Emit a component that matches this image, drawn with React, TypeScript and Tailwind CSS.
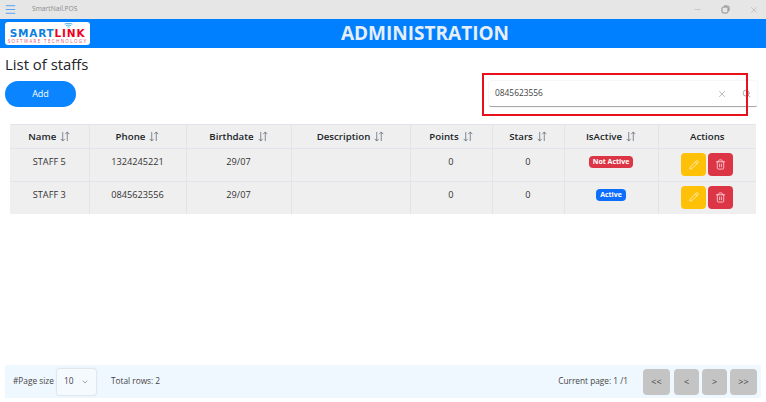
import React from "react";
import { Menu, Minus, X, Search, ChevronDown, Pencil, Trash2 } from "lucide-react";

const font = { fontFamily: '"Open Sans","Noto Sans",sans-serif' };
const cols = [79, 97, 105, 119, 82, 72, 94, 98];
const heads = ["Name", "Phone", "Birthdate", "Description", "Points", "Stars", "IsActive", "Actions"];

function Sort() {
  return (
    <svg width="10" height="11" viewBox="0 0 11 12" fill="none" stroke="#6a7280" strokeWidth="0.9" className="ml-[4px] shrink-0">
      <path d="M3 1v10M.8 8.600 3 11l2.200-2.400M8 11V1M5.800 3.400 8 1l2.200 2.400" />
    </svg>
  );
}

function Row({ name, phone, active }: { name: string; phone: string; active: boolean }) {
  return (
    <tr className="h-[32.5px]">
      {[name, phone, "29/07", "", "0", "0"].map((v, i) => (
        <td key={i} className="p-0 align-top border-t border-r border-[#e1e4ea] pt-[6px] text-center text-[9.2px] leading-[14px] text-[#333]">
          {v}
        </td>
      ))}
      <td className="p-0 align-top border-t border-r border-[#e1e4ea] pt-[7px]">
        <div className="flex justify-center">
          <span className={`block h-[12px] rounded-[4px] px-[4px] text-[7px] font-bold leading-[12px] text-white ${active ? "bg-[#0d6efd]" : "bg-[#dc3545]"}`}>
            {active ? "Active" : "Not Active"}
          </span>
        </div>
      </td>
      <td className="p-0 align-top border-t border-[#e1e4ea]">
        <div className="flex justify-center gap-[2px] pt-[4px]">
          <div className="flex h-[23px] w-[25px] items-center justify-center rounded-[4px] bg-[#ffc107]">
            <Pencil size={10} color="#fff" strokeWidth={1.5} />
          </div>
          <div className="flex h-[23px] w-[25px] items-center justify-center rounded-[4px] bg-[#dc3545]">
            <Trash2 size={11} color="#ffd5da" strokeWidth={1.8} />
          </div>
        </div>
      </td>
    </tr>
  );
}

function PageBtn({ t, w }: { t: string; w: string }) {
  return (
    <div className={`flex h-[26px] items-center justify-center rounded-[4px] bg-[#c4c4c4] text-[9px] text-[#444] ${w}`}>{t}</div>
  );
}

export default function App() {
  return (
    <div className="relative flex h-[402px] w-[766px] flex-col overflow-hidden bg-white" style={font}>
      <div className="flex h-[19px] items-center bg-[#e6e6e6]">
        <Menu size={13} color="#3f9bf5" strokeWidth={1.6} className="ml-[4px]" />
        <span className="ml-[15px] text-[6.7px] text-[#8a8a8a]">SmartNail.POS</span>
        <div className="ml-auto mr-[7px] flex items-center gap-[19px] text-[#999]">
          <Minus size={9} strokeWidth={1} />
          <svg width="9" height="9" viewBox="0 0 9 9" fill="none" stroke="#888" strokeWidth="1">
            <rect x="1" y="2" width="6" height="6" rx="1.5" />
            <path d="M3 1h3.500A1.500 1.500 0 0 1 8 2.500V6" />
          </svg>
          <X size={10} strokeWidth={1} />
        </div>
      </div>

      <div className="flex h-[29px] items-center bg-[#0080ff] pl-[5px] pr-[6px]">
        <div className="relative flex h-[23px] w-[85px] shrink-0 flex-col items-center rounded-[3px] bg-white pt-[7px]">
          <svg width="9" height="5" viewBox="0 0 9 5" fill="none" stroke="#2aa4e8" strokeWidth="0.9" className="absolute left-[59px] top-[1px]">
            <path d="M.6 1.200c2.400-1.200 5.400-1.200 7.800 0M2 2.700c1.600-.8 3.400-.8 5 0M3.500 4.200c.6-.3 1.400-.3 2 0" />
          </svg>
          <div className="whitespace-nowrap text-[10.5px] font-black leading-[9px] tracking-[0.8px]" style={{ fontFamily: '"DejaVu Sans",sans-serif' }}>
            <span className="text-[#0a7fe0]">SMART</span>
            <span className="text-[#f00020]">LINK</span>
          </div>
          <div className="mt-[1px] whitespace-nowrap text-[4.500px] leading-[5px] tracking-[1.350px] text-[#e8506a]">SOFTWARE TECHNOLOGY</div>
        </div>
        <span className="flex-1 text-center text-[19px] font-bold leading-[29px] text-[#e6eef8]">ADMINISTRATION</span>
      </div>

      <div className="px-[5px]">
        <h1 className="mt-[5px] h-[22px] text-[14.9px] leading-[22px] text-[#212529]">List of staffs</h1>
      </div>

      <div className="mt-[6px] flex items-start justify-between pl-[5px] pr-[9px]">
        <button className="flex h-[26px] w-[71px] items-center justify-center rounded-[13px] bg-[#0a84ff] text-[9px] text-white">Add</button>
        <div className="flex h-[26px] w-[268px] items-center rounded-[2px] border-b border-[#a8a8a8] bg-white pl-[6px] pr-[6px] shadow-[0_0_2px_rgba(0,0,0,0.12)]">
          <span className="text-[8.4px] text-[#444]">0845623556</span>
          <X size={10} color="#777" strokeWidth={1.2} className="ml-auto mr-[15px]" />
          <Search size={9} color="#777" strokeWidth={1.6} />
        </div>
      </div>

      <div className="ml-[10px] mt-[17px] w-[746px]">
        <table className="table-fixed border-collapse bg-[#efefef]" style={{ width: 746 }}>
          <colgroup>
            {cols.map((w, i) => (
              <col key={i} style={{ width: w }} />
            ))}
          </colgroup>
          <thead>
            <tr className="h-[24px]">
              {heads.map((h, i) => (
                <th key={h} className={`p-0 border-t border-[#e1e4ea] ${i < 7 ? "border-r" : ""} text-[9.7px] font-semibold leading-[14px] text-[#212529]`}>
                  <div className="flex items-center justify-center">
                    {h}
                    {i < 7 && <Sort />}
                  </div>
                </th>
              ))}
            </tr>
          </thead>
          <tbody>
            <Row name="STAFF 5" phone="1324245221" active={false} />
            <Row name="STAFF 3" phone="0845623556" active={true} />
          </tbody>
        </table>
      </div>

      <div className="mx-[5px] mb-[4px] mt-auto flex h-[33px] items-center bg-[#f0f8ff] pl-[8px] pr-[4px] text-[8.3px] text-[#444]">
        <span>#Page size</span>
        <div className="ml-[3px] flex h-[26px] w-[39px] items-center rounded-[2px] bg-[#f5faff] pl-[7px] shadow-[0_0_2px_rgba(0,0,0,0.25)]">
          10
          <ChevronDown size={8} color="#777" className="ml-[8px]" />
        </div>
        <span className="ml-[15px]">Total rows: 2</span>
        <span className="ml-auto mr-[15px]">Current page: 1 /1</span>
        <div className="flex gap-[3px]">
          <PageBtn t="<<" w="mr-[1px] w-[27px]" />
          <PageBtn t="<" w="w-[25px]" />
          <PageBtn t=">" w="w-[25px]" />
          <PageBtn t=">>" w="w-[27px]" />
        </div>
      </div>

      <div className="absolute left-[482px] top-[73px] h-[43px] w-[266px] border-2 border-[#e8101c]" />
    </div>
  );
}
